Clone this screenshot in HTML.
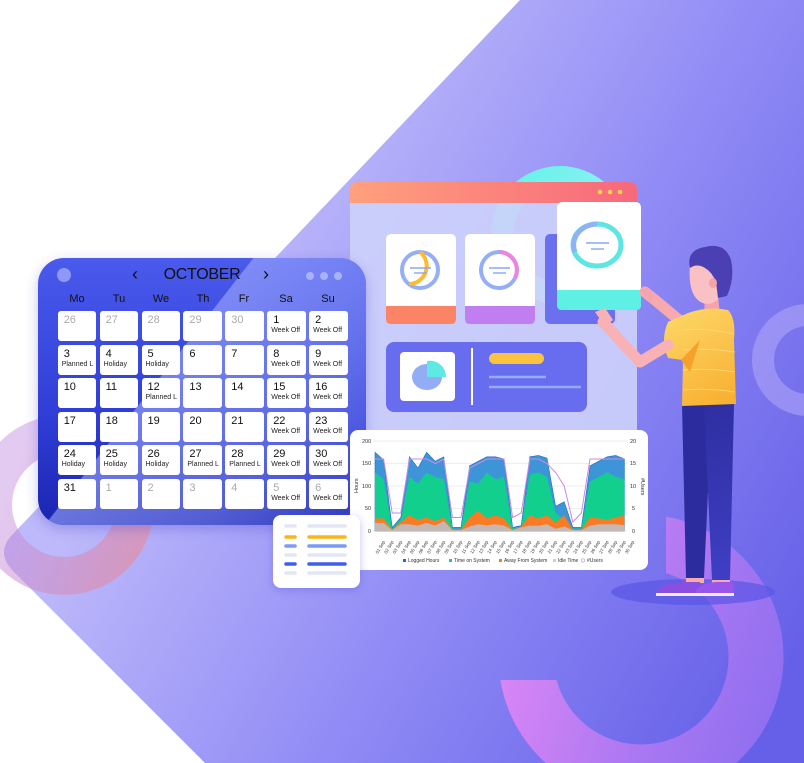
<!DOCTYPE html>
<html><head><meta charset="utf-8"><style>
*{margin:0;padding:0;box-sizing:border-box}
body{width:804px;height:763px;overflow:hidden;background:#fff;font-family:"Liberation Sans",sans-serif;position:relative}
svg{position:absolute;left:0;top:0}
.cal{position:absolute;left:38px;top:258px;width:328px;height:267px;border-radius:26px;overflow:hidden;background:linear-gradient(180deg,#4a5aec 0%,#2f3dd6 60%,#1a25b0 100%);box-shadow:0 4px 12px rgba(60,60,200,.3)}
.cal .ov{position:absolute;inset:0;background:linear-gradient(128deg,transparent 40%,rgba(170,180,255,.55) 40.3%,rgba(150,160,250,.45) 70%,rgba(120,130,240,.2) 100%)}
.cell{position:absolute;width:38.5px;height:30px;background:#fff;border-radius:3px;padding:3px 0 0 6px;color:#111;font-size:11px;line-height:12px}
.cell.g{color:#aaa}
.cell small{display:block;font-size:7px;line-height:9px;margin-left:-2px;color:#222}
.dn{position:absolute;top:35px;font-size:11px;color:#111;width:38px;text-align:center}
.card{position:absolute;background:#fff;border-radius:6px}
</style></head><body>
<svg width="804" height="763" viewBox="0 0 804 763">
<defs>
<linearGradient id="bg" x1="200" y1="300" x2="800" y2="650" gradientUnits="userSpaceOnUse">
<stop offset="0" stop-color="#bdb9fa"/><stop offset=".5" stop-color="#8f8af5"/><stop offset="1" stop-color="#6660e8"/></linearGradient>
<linearGradient id="ring" x1="500" y1="600" x2="790" y2="700" gradientUnits="userSpaceOnUse">
<stop offset="0" stop-color="#e088f5"/><stop offset=".6" stop-color="#a977f2"/><stop offset="1" stop-color="#8d6ff0"/></linearGradient>
<linearGradient id="lring" x1="0" y1="500" x2="160" y2="560" gradientUnits="userSpaceOnUse">
<stop offset="0" stop-color="#c08ae0" stop-opacity=".6"/><stop offset="1" stop-color="#e8909c"/></linearGradient>
<linearGradient id="hdr" x1="350" x2="637" gradientUnits="userSpaceOnUse"><stop offset="0" stop-color="#ffa07c"/><stop offset="1" stop-color="#f7687c"/></linearGradient>
<linearGradient id="teal" x1="500" y1="160" x2="620" y2="280" gradientUnits="userSpaceOnUse"><stop offset="0" stop-color="#5ff2e6"/><stop offset="1" stop-color="#a9f0ff"/></linearGradient>
<linearGradient id="shirt" x1="680" y1="310" x2="735" y2="405" gradientUnits="userSpaceOnUse"><stop offset="0" stop-color="#fdd565"/><stop offset="1" stop-color="#f8ae2e"/></linearGradient>
<linearGradient id="pants" x1="680" y1="405" x2="730" y2="580" gradientUnits="userSpaceOnUse"><stop offset="0" stop-color="#2e2ea0"/><stop offset="1" stop-color="#3e3fc4"/></linearGradient>
<clipPath id="rc"><rect x="666" y="500" width="140" height="263"/><rect x="480" y="680" width="330" height="90"/></clipPath>
</defs>
<path d="M520,0 L804,0 L804,763 L205,763 L12,570 Q-4,552 12,535 Z" fill="url(#bg)"/>
<circle cx="64" cy="505" r="71" fill="none" stroke="url(#lring)" stroke-width="38" opacity=".75"/>
<circle cx="808" cy="360" r="45" fill="none" stroke="#b3aaf8" stroke-width="22" opacity=".55"/>
<g clip-path="url(#rc)"><circle cx="641" cy="657" r="115" fill="none" stroke="url(#ring)" stroke-width="55"/></g>
<circle cx="560" cy="235" r="58" fill="none" stroke="url(#teal)" stroke-width="22"/>
<rect x="350" y="182" width="287" height="260" rx="8" fill="#cdd2fb" opacity=".9"/>
<path d="M358,182 H629 Q637,182 637,190 V203 H350 V190 Q350,182 358,182Z" fill="url(#hdr)"/>
<circle cx="600" cy="192" r="2.3" fill="#ffd54a"/><circle cx="610" cy="192" r="2.3" fill="#ffd54a"/><circle cx="620" cy="192" r="2.3" fill="#ffd54a"/>
<g>
<rect x="386" y="234" width="70" height="90" rx="5" fill="#fff"/>
<path d="M386,306 H456 V319 Q456,324 451,324 H391 Q386,324 386,319Z" fill="#fb8467"/>
<circle cx="420" cy="270" r="18" fill="none" stroke="#94aef8" stroke-width="4"/>
<path d="M420,252 A18,18 0 0 1 409,284" fill="none" stroke="#fdbb2d" stroke-width="4"/>
<line x1="410" y1="268" x2="431" y2="268" stroke="#8aa5f5" stroke-width="1.4"/><line x1="414" y1="273" x2="427" y2="273" stroke="#8aa5f5" stroke-width="1.4"/>
<rect x="465" y="234" width="70" height="90" rx="5" fill="#fff"/>
<path d="M465,306 H535 V319 Q535,324 530,324 H470 Q465,324 465,319Z" fill="#c07ef0"/>
<circle cx="499" cy="270" r="18" fill="none" stroke="#94aef8" stroke-width="4"/>
<path d="M499,252 A18,18 0 0 1 515,278" fill="none" stroke="#ea85e0" stroke-width="4"/>
<line x1="489" y1="268" x2="510" y2="268" stroke="#8aa5f5" stroke-width="1.4"/><line x1="493" y1="273" x2="506" y2="273" stroke="#8aa5f5" stroke-width="1.4"/>
<rect x="545" y="234" width="70" height="90" rx="5" fill="#6b70ef"/>
<rect x="557" y="202" width="84" height="108" rx="5" fill="#fff"/>
<path d="M557,290 H641 V305 Q641,310 636,310 H562 Q557,310 557,305Z" fill="#5ef0e4"/>
<ellipse cx="597" cy="245" rx="24" ry="21" fill="none" stroke="#5fe6e4" stroke-width="5"/>
<path d="M575,252 A24,21 0 0 1 597,224" fill="none" stroke="#8fb1f8" stroke-width="5"/>
<line x1="586" y1="243" x2="609" y2="243" stroke="#8aa5f5" stroke-width="1.4"/><line x1="591" y1="249" x2="604" y2="249" stroke="#8aa5f5" stroke-width="1.4"/>
</g>
<rect x="386" y="342" width="201" height="70" rx="8" fill="#686df0"/>
<rect x="400" y="352" width="55" height="49" rx="4" fill="#fff"/>
<ellipse cx="427" cy="377" rx="15" ry="13" fill="#93acf6"/>
<path d="M427,361 A16,16 0 0 1 446,377 L427,377Z" fill="#5ee9e4"/>
<line x1="472" y1="348" x2="472" y2="405" stroke="#fff" stroke-width="2"/>
<rect x="489" y="353" width="55" height="11" rx="5.5" fill="#fbc440"/>
<line x1="489" y1="377" x2="546" y2="377" stroke="#93acf6" stroke-width="2.5"/>
<line x1="489" y1="387" x2="581" y2="387" stroke="#93acf6" stroke-width="2.5"/>
<!-- person -->
<ellipse cx="693" cy="592" rx="82" ry="13" fill="#5a55e6" opacity=".7"/>
<path d="M685,325 L655,300 L645,292" stroke="#f7aaae" stroke-width="11" stroke-linecap="round" fill="none"/>
<path d="M640,290 l8,-2 6,8 -4,6z" fill="#f5a4ad"/>
<path d="M682,404 L712,404 L704,578 L686,578Z" fill="#2d2c9e"/>
<path d="M704,404 L734,404 L730,580 L712,580Z" fill="url(#pants)"/>
<path d="M686,578 h18 v5 h-18z M712,580 h18 v3 h-18z" fill="#f7aaae"/>
<path d="M658,590 Q665,582 688,582 L700,582 L700,594 L658,594Z" fill="#8b4fe0"/>
<path d="M696,590 Q705,582 718,582 L733,582 L734,594 L696,594Z" fill="#9a56ea"/>
<rect x="656" y="593" width="78" height="3" fill="#ececff"/>
<path d="M705,295 L718,295 L720,316 L704,316Z" fill="#f4a2ab"/>
<path d="M690,264 Q687,300 706,304 Q716,304 720,296 L718,266Z" fill="#f9c1c4"/>
<path d="M690,268 Q686,250 705,247 Q725,242 731,260 Q735,278 727,296 L718,298 L716,282 Q712,272 705,268 Q697,263 690,268Z" fill="#4a40b4"/>
<ellipse cx="713" cy="283" rx="4" ry="5" fill="#f4a2ab"/>
<path d="M688,313 Q708,306 728,310 Q736,318 734,340 L736,404 L682,406 L683,360 L668,358 Q660,340 668,322Z" fill="url(#shirt)"/>
<g stroke="#ffe08a" stroke-width=".8" fill="none" opacity=".8"><path d="M684,330 Q710,328 734,334"/><path d="M683,350 Q710,348 735,352"/><path d="M683,370 Q710,368 735,372"/><path d="M683,390 Q710,388 735,392"/></g>
<path d="M681,360 L700,340 L690,372Z" fill="#f7a02a"/>
<path d="M668,345 L640,362 L603,322" stroke="#f8b2b6" stroke-width="11" stroke-linecap="round" stroke-linejoin="round" fill="none"/>
<path d="M595,312 l10,-4 8,12 -8,6z" fill="#f8b2b6"/>
</svg>
<div class="cal"><div class="ov"></div>
<div style="position:absolute;left:19px;top:10px;width:14px;height:14px;border-radius:50%;background:#8e98f6"></div>
<div style="position:absolute;left:94px;top:6px;font-size:18px;color:#111">&lsaquo;</div>
<div style="position:absolute;left:0;width:328px;text-align:center;top:8px;font-size:16px;color:#111;letter-spacing:-.3px">OCTOBER</div>
<div style="position:absolute;left:225px;top:6px;font-size:18px;color:#111">&rsaquo;</div>
<div style="position:absolute;left:268px;top:14px;width:8px;height:8px;border-radius:50%;background:#a9b1f8"></div>
<div style="position:absolute;left:282px;top:14px;width:8px;height:8px;border-radius:50%;background:#a9b1f8"></div>
<div style="position:absolute;left:296px;top:14px;width:8px;height:8px;border-radius:50%;background:#a9b1f8"></div>
<div class="dn" style="left:20px">Mo</div><div class="dn" style="left:62px">Tu</div><div class="dn" style="left:104px">We</div><div class="dn" style="left:146px">Th</div><div class="dn" style="left:187px">Fr</div><div class="dn" style="left:229px">Sa</div><div class="dn" style="left:271px">Su</div>
<div class="cell g" style="left:19.7px;top:53px">26</div><div class="cell g" style="left:61.6px;top:53px">27</div><div class="cell g" style="left:103.5px;top:53px">28</div><div class="cell g" style="left:145.4px;top:53px">29</div><div class="cell g" style="left:187.3px;top:53px">30</div><div class="cell" style="left:229.2px;top:53px">1<small>Week Off</small></div><div class="cell" style="left:271.1px;top:53px">2<small>Week Off</small></div>
<div class="cell" style="left:19.7px;top:86.6px">3<small>Planned L</small></div><div class="cell" style="left:61.6px;top:86.6px">4<small>Holiday</small></div><div class="cell" style="left:103.5px;top:86.6px">5<small>Holiday</small></div><div class="cell" style="left:145.4px;top:86.6px">6</div><div class="cell" style="left:187.3px;top:86.6px">7</div><div class="cell" style="left:229.2px;top:86.6px">8<small>Week Off</small></div><div class="cell" style="left:271.1px;top:86.6px">9<small>Week Off</small></div>
<div class="cell" style="left:19.7px;top:120.2px">10</div><div class="cell" style="left:61.6px;top:120.2px">11</div><div class="cell" style="left:103.5px;top:120.2px">12<small>Planned L</small></div><div class="cell" style="left:145.4px;top:120.2px">13</div><div class="cell" style="left:187.3px;top:120.2px">14</div><div class="cell" style="left:229.2px;top:120.2px">15<small>Week Off</small></div><div class="cell" style="left:271.1px;top:120.2px">16<small>Week Off</small></div>
<div class="cell" style="left:19.7px;top:153.8px">17</div><div class="cell" style="left:61.6px;top:153.8px">18</div><div class="cell" style="left:103.5px;top:153.8px">19</div><div class="cell" style="left:145.4px;top:153.8px">20</div><div class="cell" style="left:187.3px;top:153.8px">21</div><div class="cell" style="left:229.2px;top:153.8px">22<small>Week Off</small></div><div class="cell" style="left:271.1px;top:153.8px">23<small>Week Off</small></div>
<div class="cell" style="left:19.7px;top:187.4px">24<small>Holiday</small></div><div class="cell" style="left:61.6px;top:187.4px">25<small>Holiday</small></div><div class="cell" style="left:103.5px;top:187.4px">26<small>Holiday</small></div><div class="cell" style="left:145.4px;top:187.4px">27<small>Planned L</small></div><div class="cell" style="left:187.3px;top:187.4px">28<small>Planned L</small></div><div class="cell" style="left:229.2px;top:187.4px">29<small>Week Off</small></div><div class="cell" style="left:271.1px;top:187.4px">30<small>Week Off</small></div>
<div class="cell" style="left:19.7px;top:221px">31</div><div class="cell g" style="left:61.6px;top:221px">1</div><div class="cell g" style="left:103.5px;top:221px">2</div><div class="cell g" style="left:145.4px;top:221px">3</div><div class="cell g" style="left:187.3px;top:221px">4</div><div class="cell g" style="left:229.2px;top:221px">5<small>Week Off</small></div><div class="cell g" style="left:271.1px;top:221px">6<small>Week Off</small></div>
</div>
<svg width="804" height="763" viewBox="0 0 804 763">
<rect x="350" y="430" width="298" height="140" rx="8" fill="#fff"/>
<g stroke="#ddd" stroke-width=".6">
<line x1="373" y1="441" x2="627" y2="441"/><line x1="373" y1="463.5" x2="627" y2="463.5"/><line x1="373" y1="486" x2="627" y2="486"/><line x1="373" y1="508.5" x2="627" y2="508.5"/><line x1="373" y1="531" x2="627" y2="531"/></g>
<g font-size="5.5" fill="#333" font-family="Liberation Sans">
<text x="362" y="443">200</text><text x="362" y="465">150</text><text x="362" y="488">100</text><text x="365" y="510">50</text><text x="368" y="533">0</text>
<text x="630" y="443">20</text><text x="630" y="465">15</text><text x="630" y="488">10</text><text x="632" y="510">5</text><text x="632" y="533">0</text>
<text transform="translate(358,493) rotate(-90)">Hours</text><text transform="translate(641,478) rotate(90)">#Users</text>
</g>
<polygon fill="#3d95d8" stroke="#1e6fc8" stroke-width=".6" points="375,531 375,452.3 383.6,459.9 392.2,527.4 400.8,517.5 409.4,456.8 418,468 426.6,452.3 435.2,461.3 443.8,456.8 452.4,527.4 461,527.4 469.6,465.8 478.2,461.3 486.8,456.8 495.4,456.8 504,459 512.6,527.4 521.2,525.6 529.8,456.8 538.4,455.4 547,458.1 555.6,506.3 564.2,501.8 572.8,527.4 581.4,527.4 590,465.8 598.6,461.3 607.2,456.8 615.8,455.4 624.4,459 624.4,531"/>
<polygon fill="#12cf8e" points="375,531 375,472.5 383.6,479.3 392.2,528.8 400.8,519.8 409.4,477 418,483.8 426.6,472.5 435.2,477 443.8,479.3 452.4,528.8 461,528.8 469.6,481.5 478.2,483.8 486.8,472.5 495.4,479.3 504,477 512.6,528.8 521.2,526.5 529.8,474.8 538.4,472.5 547,477 555.6,513 564.2,519.8 572.8,528.8 581.4,528.8 590,481.5 598.6,477 607.2,472.5 615.8,477 624.4,479.3 624.4,531"/>
<polygon fill="#fb7a24" points="375,531 375,518.4 383.6,518.4 392.2,529.7 400.8,522 409.4,515.3 418,519.8 426.6,517.5 435.2,521.1 443.8,517.5 452.4,529.7 461,529.7 469.6,517.5 478.2,510.8 486.8,518.4 495.4,515.3 504,518.4 512.6,529.7 521.2,526.5 529.8,515.3 538.4,518.4 547,515.3 555.6,522.9 564.2,515.3 572.8,529.7 581.4,529.7 590,517.5 598.6,518.4 607.2,519.8 615.8,517.5 624.4,515.3 624.4,531"/>
<polygon fill="#c4b8b4" points="375,531 375,522.9 383.6,522.9 392.2,530.1 400.8,524.3 409.4,524.3 418,525.6 426.6,522.9 435.2,525.6 443.8,521.1 452.4,530.1 461,530.1 469.6,526.5 478.2,524.3 486.8,525.2 495.4,524.3 504,525.6 512.6,530.1 521.2,527.4 529.8,525.6 538.4,525.6 547,524.3 555.6,528.8 564.2,526.5 572.8,530.1 581.4,530.1 590,525.6 598.6,524.3 607.2,524.3 615.8,524.3 624.4,525.2 624.4,531"/>
<polyline fill="none" stroke="#c98be0" stroke-width="1" points="375,459 383.6,459 392.2,513 400.8,513 409.4,459 418,459 426.6,459 435.2,463.5 443.8,459 452.4,517.5 461,517.5 469.6,468 478.2,463.5 486.8,459 495.4,459 504,459 512.6,517.5 521.2,513 529.8,459 538.4,459 547,463.5 555.6,472.5 564.2,486 572.8,522 581.4,513 590,459 598.6,459 607.2,459 615.8,459 624.4,459"/>
<g font-size="4.5" fill="#333" font-family="Liberation Sans">
<text transform="translate(378,554) rotate(-60)">01 Sep</text><text transform="translate(386.6,554) rotate(-60)">02 Sep</text><text transform="translate(395.2,554) rotate(-60)">03 Sep</text><text transform="translate(403.8,554) rotate(-60)">04 Sep</text><text transform="translate(412.4,554) rotate(-60)">05 Sep</text><text transform="translate(421,554) rotate(-60)">06 Sep</text><text transform="translate(429.6,554) rotate(-60)">07 Sep</text><text transform="translate(438.2,554) rotate(-60)">08 Sep</text><text transform="translate(446.8,554) rotate(-60)">09 Sep</text><text transform="translate(455.4,554) rotate(-60)">10 Sep</text><text transform="translate(464,554) rotate(-60)">11 Sep</text><text transform="translate(472.6,554) rotate(-60)">12 Sep</text><text transform="translate(481.2,554) rotate(-60)">13 Sep</text><text transform="translate(489.8,554) rotate(-60)">14 Sep</text><text transform="translate(498.4,554) rotate(-60)">15 Sep</text><text transform="translate(507,554) rotate(-60)">16 Sep</text><text transform="translate(515.6,554) rotate(-60)">17 Sep</text><text transform="translate(524.2,554) rotate(-60)">18 Sep</text><text transform="translate(532.8,554) rotate(-60)">19 Sep</text><text transform="translate(541.4,554) rotate(-60)">20 Sep</text><text transform="translate(550,554) rotate(-60)">21 Sep</text><text transform="translate(558.6,554) rotate(-60)">22 Sep</text><text transform="translate(567.2,554) rotate(-60)">23 Sep</text><text transform="translate(575.8,554) rotate(-60)">24 Sep</text><text transform="translate(584.4,554) rotate(-60)">25 Sep</text><text transform="translate(593,554) rotate(-60)">26 Sep</text><text transform="translate(601.6,554) rotate(-60)">27 Sep</text><text transform="translate(610.2,554) rotate(-60)">28 Sep</text><text transform="translate(618.8,554) rotate(-60)">29 Sep</text><text transform="translate(627.4,554) rotate(-60)">30 Sep</text>
</g>
<g font-size="5" fill="#333" font-family="Liberation Sans">
<rect x="403" y="559" width="3" height="3" fill="#1e6fc8"/><text x="408" y="562">Logged Hours</text>
<rect x="449" y="559" width="3" height="3" fill="#12cf8e"/><text x="454" y="562">Time on System</text>
<rect x="499" y="559" width="3" height="3" fill="#fb7a24"/><text x="504" y="562">Away From System</text>
<rect x="553" y="559" width="3" height="3" fill="#c4d0dc"/><text x="558" y="562">Idle Time</text>
<circle cx="583" cy="560.5" r="1.7" fill="none" stroke="#c98be0" stroke-width=".6"/><text x="587" y="562">#Users</text>
</g>
</svg>
<div class="card" style="left:273px;top:515px;width:87px;height:73px;border-radius:8px;box-shadow:0 2px 8px rgba(80,80,220,.35)">
<svg width="87" height="73" style="position:relative">
<g stroke-width="3.5" stroke-linecap="round">
<line x1="13" y1="11" x2="22" y2="11" stroke="#e4e6f5"/><line x1="36" y1="11" x2="72" y2="11" stroke="#e4e6f5"/>
<line x1="13" y1="22" x2="22" y2="22" stroke="#fbb516"/><line x1="36" y1="22" x2="72" y2="22" stroke="#fbb516"/>
<line x1="13" y1="31" x2="22" y2="31" stroke="#7a9cf5"/><line x1="36" y1="31" x2="72" y2="31" stroke="#7a9cf5"/>
<line x1="13" y1="40" x2="22" y2="40" stroke="#e4e6f5"/><line x1="36" y1="40" x2="72" y2="40" stroke="#e4e6f5"/>
<line x1="13" y1="49" x2="22" y2="49" stroke="#3f5ef0"/><line x1="36" y1="49" x2="72" y2="49" stroke="#3f5ef0"/>
<line x1="13" y1="58" x2="22" y2="58" stroke="#e4e6f5"/><line x1="36" y1="58" x2="72" y2="58" stroke="#e4e6f5"/>
</g></svg></div>
</body></html>
